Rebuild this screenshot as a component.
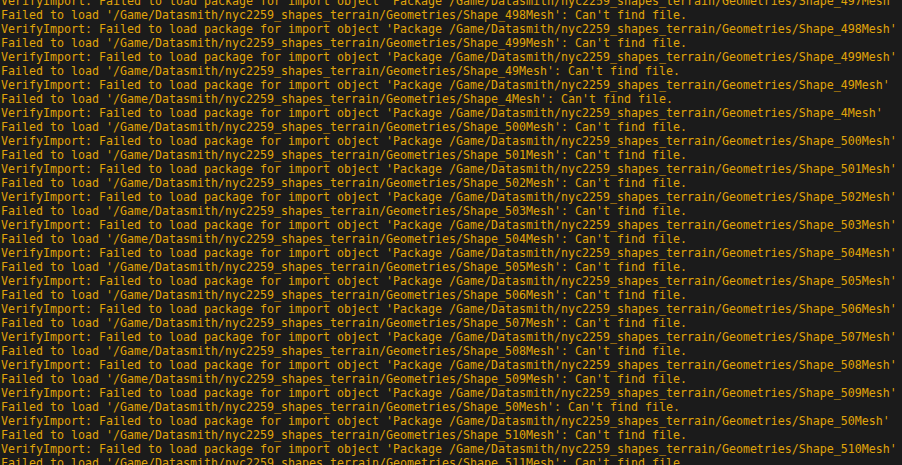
import React from "react";

const ids = ["498", "499", "49", "4", "500", "501", "502", "503", "504", "505", "506", "507", "508", "509", "50", "510"];

function verify(id: string) {
  return `VerifyImport: Failed to load package for import object 'Package /Game/Datasmith/nyc2259_shapes_terrain/Geometries/Shape_${id}Mesh'`;
}
function failed(id: string) {
  return `Failed to load '/Game/Datasmith/nyc2259_shapes_terrain/Geometries/Shape_${id}Mesh': Can't find file.`;
}

export default function App() {
  const lines: string[] = [verify("497")];
  ids.forEach((id) => {
    lines.push(failed(id));
    lines.push(verify(id));
  });
  lines.push(failed("511"));
  return (
    <div className="w-[902px] h-[465px] overflow-hidden bg-[#1b1b1b]">
      <div
        className="-mt-[6px] pl-px text-[#e0a50a] text-[11.63px] leading-[14px] whitespace-pre"
        style={{ fontFamily: '"DejaVu Sans Mono", monospace' }}
      >
        {lines.map((l, i) => (
          <div key={i}>{l}</div>
        ))}
      </div>
    </div>
  );
}
